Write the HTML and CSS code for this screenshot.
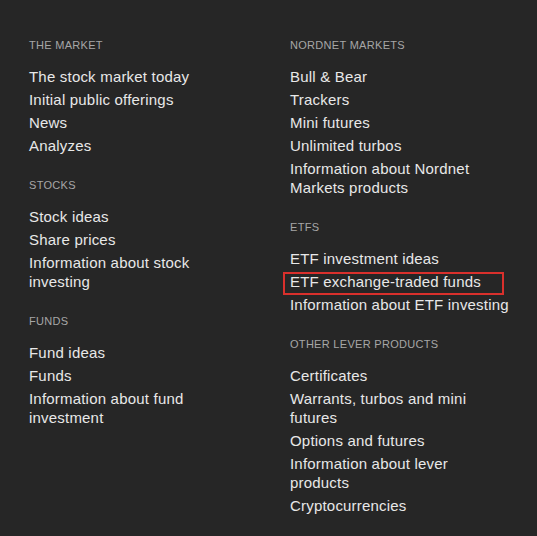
FILE: index.html
```html
<!DOCTYPE html>
<html lang="en">
<head>
<meta charset="utf-8">
<link rel="stylesheet" href="styles.css">
</head>
<body>
<div class="menu">
  <div class="col">
    <section class="group">
      <h3 class="title">THE MARKET</h3>
      <ul class="links">
        <li>The stock market today</li>
        <li>Initial public offerings</li>
        <li>News</li>
        <li>Analyzes</li>
      </ul>
    </section>
    <section class="group">
      <h3 class="title">STOCKS</h3>
      <ul class="links">
        <li>Stock ideas</li>
        <li>Share prices</li>
        <li>Information about stock investing</li>
      </ul>
    </section>
    <section class="group">
      <h3 class="title">FUNDS</h3>
      <ul class="links">
        <li>Fund ideas</li>
        <li>Funds</li>
        <li>Information about fund investment</li>
      </ul>
    </section>
  </div>
  <div class="col">
    <section class="group">
      <h3 class="title">NORDNET MARKETS</h3>
      <ul class="links">
        <li>Bull &amp; Bear</li>
        <li>Trackers</li>
        <li>Mini futures</li>
        <li>Unlimited turbos</li>
        <li>Information about Nordnet Markets products</li>
      </ul>
    </section>
    <section class="group">
      <h3 class="title">ETFS</h3>
      <ul class="links">
        <li>ETF investment ideas</li>
        <li class="marked">ETF exchange-traded funds</li>
        <li>Information about ETF investing</li>
      </ul>
    </section>
    <section class="group">
      <h3 class="title">OTHER LEVER PRODUCTS</h3>
      <ul class="links">
        <li>Certificates</li>
        <li>Warrants, turbos and mini futures</li>
        <li>Options and futures</li>
        <li>Information about lever products</li>
        <li>Cryptocurrencies</li>
      </ul>
    </section>
  </div>
</div>
</body>
</html>
```

FILE: styles.css
```css
html, body {
  margin: 0;
  padding: 0;
  background: #262626;
}
body {
  font-family: "Liberation Sans", Arial, sans-serif;
  color: #e8e8e8;
  width: 537px;
  height: 536px;
  overflow: hidden;
}
.menu {
  display: grid;
  grid-template-columns: 200px 220px;
  column-gap: 61px;
  padding: 38px 0 0 29px;
}
.col {
  display: flex;
  flex-direction: column;
  gap: 23px;
}
.title {
  margin: 0 0 15px 0;
  font-size: 11px;
  line-height: 14px;
  font-weight: 400;
  letter-spacing: 0.3px;
  color: #a6a6a6;
}
.links {
  list-style: none;
  margin: 0;
  padding: 0;
  display: flex;
  flex-direction: column;
  gap: 4px;
}
.links li {
  font-size: 15px;
  line-height: 19px;
  letter-spacing: 0.2px;
}
.marked {
  position: relative;
}
.marked::after {
  content: "";
  position: absolute;
  left: -7px;
  top: 0;
  width: 221px;
  height: 23px;
  border: 2px solid #d9302c;
  box-sizing: border-box;
}
```
